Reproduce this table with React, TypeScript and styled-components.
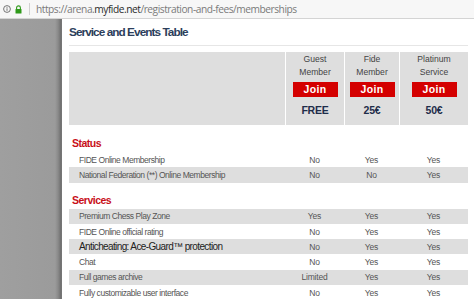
import React from 'react';
import styled, { createGlobalStyle } from 'styled-components';

const GlobalStyle = createGlobalStyle`
  html, body {
    margin: 0;
    padding: 0;
    background: #fff;
  }
  body {
    width: 474px;
    height: 299px;
    overflow: hidden;
    font-family: "Liberation Sans", Arial, sans-serif;
  }
`;

const Screen = styled.div`
  display: flex;
  flex-direction: column;
  width: 474px;
  height: 299px;
`;

const AddressBar = styled.div`
  height: 18px;
  display: flex;
  align-items: center;
  background: #f7f7f7;
  border-bottom: 1px solid #d4d4d4;
  padding-left: 3px;
  gap: 4px;
`;

const Divider = styled.div`
  width: 1px;
  height: 12px;
  background: #d0d0d0;
  margin: 0 2px 0 3px;
`;

const Url = styled.div`
  font-family: "Open Sans", sans-serif;
  font-size: 10.2px;
  letter-spacing: -0.47px;
  color: #7a7a7a;
  white-space: nowrap;
`;

const Host = styled.span`
  color: #2a2a2a;
`;

const Body = styled.div`
  flex: 1;
  display: flex;
  min-height: 0;
`;

const Sidebar = styled.div`
  width: 62px;
  flex-shrink: 0;
  background: linear-gradient(to right, #9f9f9f 0, #9b9b9b 55px, #8a8a8a 58px, #6e6e6e 61px, #7d7d7d 62px);
`;

const Page = styled.div`
  flex: 1;
  padding: 5px 6px 0 7px;
  overflow: hidden;
`;

const Title = styled.h1`
  margin: 0;
  font-size: 11.8px;
  line-height: 16px;
  letter-spacing: -0.95px;
  font-weight: bold;
  color: #2c3e5b;
`;

const Rule = styled.div`
  height: 1px;
  background: #e6e6e6;
  margin-top: 5px;
`;

const Grid = styled.div`
  display: grid;
  grid-template-columns: 216px 59px 55px 69px;
  width: 399px;
`;

const HeaderBlock = styled(Grid)`
  margin-top: 6px;
  height: 73px;
`;

const HeadCell = styled.div<{ $first?: boolean }>`
  background: #dedede;
  border-left: ${p => (p.$first ? 'none' : '1px solid #fff')};
  display: flex;
  flex-direction: column;
  align-items: center;
  padding-top: 1px;
`;

const PlanName = styled.div`
  font-size: 8.6px;
  line-height: 13px;
  color: #444;
  text-align: center;
`;

const JoinButton = styled.button`
  margin-top: 3px;
  width: 45px;
  height: 15px;
  padding: 0;
  border: none;
  background: #d40000;
  color: #fff;
  font-family: inherit;
  font-size: 10.5px;
  letter-spacing: 0.4px;
  font-weight: bold;
  line-height: 15px;
`;

const Price = styled.div`
  margin-top: 6px;
  font-size: 10.5px;
  letter-spacing: -0.2px;
  line-height: 14px;
  font-weight: bold;
  color: #1e2d4a;
`;

const SectionTitle = styled.h2<{ $top: number }>`
  margin: 0;
  padding: ${p => p.$top}px 0 2px 3px;
  font-size: 10.5px;
  letter-spacing: -0.5px;
  line-height: 14px;
  font-weight: bold;
  color: #c8101a;
`;

const Row = styled(Grid)<{ $shaded?: boolean }>`
  height: 15.3px;
  align-items: center;
  background: ${p => (p.$shaded ? '#dedede' : 'transparent')};
`;

const Label = styled.div<{ $big?: boolean }>`
  padding-left: 10px;
  font-size: ${p => (p.$big ? '10px' : '8.5px')};
  letter-spacing: ${p => (p.$big ? '-0.62px' : '-0.45px')};
  color: ${p => (p.$big ? '#222' : '#555')};
  white-space: nowrap;
`;

const Value = styled.div`
  font-size: 8.5px;
  letter-spacing: -0.2px;
  color: #555;
  text-align: center;
`;

const InfoIcon = () => (
  <svg width="8" height="8" viewBox="0 0 8 8">
    <circle cx="4" cy="4" r="3.4" fill="none" stroke="#666" strokeWidth="0.9" />
    <rect x="3.55" y="3.3" width="0.9" height="2.5" fill="#666" />
    <rect x="3.55" y="1.9" width="0.9" height="0.9" fill="#666" />
  </svg>
);

const LockIcon = () => (
  <svg width="7" height="9" viewBox="0 0 7 9">
    <path d="M1.6 4V2.8a1.9 1.9 0 0 1 3.8 0V4" fill="none" stroke="#2f9a1a" strokeWidth="1.1" />
    <rect x="0.5" y="4" width="6" height="4.6" rx="0.5" fill="#2f9a1a" />
  </svg>
);

type Plan = { name: string[]; price: string };

const plans: Plan[] = [
  { name: ['Guest', 'Member'], price: 'FREE' },
  { name: ['Fide', 'Member'], price: '25€' },
  { name: ['Platinum', 'Service'], price: '50€' },
];

type Feature = { label: string; values: string[]; big?: boolean };

const statusRows: Feature[] = [
  { label: 'FIDE Online Membership', values: ['No', 'Yes', 'Yes'] },
  { label: 'National Federation (**) Online Membership', values: ['No', 'No', 'Yes'] },
];

const serviceRows: Feature[] = [
  { label: 'Premium Chess Play Zone', values: ['Yes', 'Yes', 'Yes'] },
  { label: 'FIDE Online official rating', values: ['No', 'Yes', 'Yes'] },
  { label: 'Anticheating: Ace-Guard™ protection', values: ['No', 'Yes', 'Yes'], big: true },
  { label: 'Chat', values: ['No', 'Yes', 'Yes'] },
  { label: 'Full games archive', values: ['Limited', 'Yes', 'Yes'] },
  { label: 'Fully customizable user interface', values: ['No', 'Yes', 'Yes'] },
];

const FeatureRows = ({ rows, startShaded }: { rows: Feature[]; startShaded: boolean }) => (
  <>
    {rows.map((r, i) => (
      <Row key={r.label} $shaded={(i % 2 === 0) === startShaded}>
        <Label $big={r.big}>{r.label}</Label>
        {r.values.map((v, j) => (
          <Value key={j}>{v}</Value>
        ))}
      </Row>
    ))}
  </>
);

export default function App() {
  return (
    <Screen>
      <GlobalStyle />
      <AddressBar>
        <InfoIcon />
        <LockIcon />
        <Divider />
        <Url>
          https://arena.<Host>myfide.net</Host>/registration-and-fees/memberships
        </Url>
      </AddressBar>
      <Body>
        <Sidebar />
        <Page>
          <Title>Service and Events Table</Title>
          <Rule />
          <HeaderBlock>
            <HeadCell $first />
            {plans.map(p => (
              <HeadCell key={p.price}>
                {p.name.map(n => (
                  <PlanName key={n}>{n}</PlanName>
                ))}
                <JoinButton>Join</JoinButton>
                <Price>{p.price}</Price>
              </HeadCell>
            ))}
          </HeaderBlock>
          <SectionTitle $top={11}>Status</SectionTitle>
          <FeatureRows rows={statusRows} startShaded={false} />
          <SectionTitle $top={10}>Services</SectionTitle>
          <FeatureRows rows={serviceRows} startShaded />
        </Page>
      </Body>
    </Screen>
  );
}
